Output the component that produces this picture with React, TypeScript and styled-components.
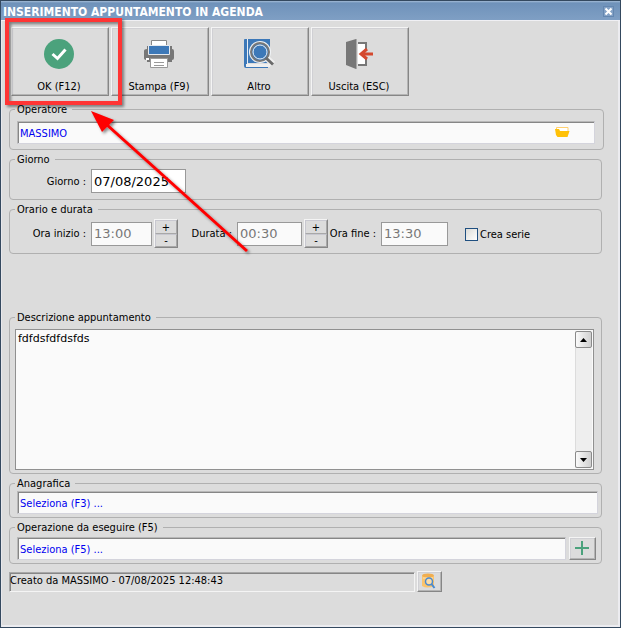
import React, { useState } from "react";
import styled, { createGlobalStyle, css } from "styled-components";

const uiFont = `"DejaVu Sans Condensed", "Noto Sans", sans-serif`;
const wideFont = `"DejaVu Sans", sans-serif`;

const GlobalStyle = createGlobalStyle`
  *, *::before, *::after { box-sizing: border-box; }
  body { margin: 0; background: #dcdcdc; }
  button, input, textarea { font: inherit; color: inherit; margin: 0; border-radius: 0; }
`;

const Window = styled.div`
  position: relative;
  display: flex;
  flex-direction: column;
  min-height: 100vh;
  overflow: hidden;
  border: 1px solid #34495f;
  background: #dcdcdc;
  box-shadow: inset 1px 0 #e8e8ec, inset -2px -2px #ececf0;
  color: #000;
  font: 11px/13px ${uiFont};
`;

const TitleBar = styled.header`
  display: flex;
  align-items: center;
  justify-content: space-between;
  height: 20px;
  padding: 3px 6px 0 2px;
  background: linear-gradient(#a3bbd6 0, #6f92ba 2px, #7f9fc4 100%);
  border-bottom: 1px solid #f0f0f4;
`;

const Title = styled.h1`
  margin: 0;
  color: #fff;
  font: bold 12px/16px ${uiFont};
  white-space: nowrap;
`;

const CloseButton = styled.button`
  display: flex;
  align-items: center;
  justify-content: center;
  width: 11px;
  height: 11px;
  margin-bottom: 2px;
  padding: 0;
  border: 1px solid #6487b0;
  background: #84a2c6;
`;

const bevel = css`
  border: 1px solid;
  border-color: #f4f4f4 #868686 #868686 #f4f4f4;
  background: #dcdcdc;
  box-shadow: inset -1px -1px #b4b4b4, inset 1px 1px #d0d0d4;
`;

const Body = styled.main`
  display: flex;
  flex-direction: column;
  gap: 3px;
  padding: 6px 18px 16px 8px;
`;

const Toolbar = styled.div`
  display: flex;
  gap: 2px;
  padding-left: 2px;
  margin-bottom: 4px;
`;

const ToolButton = styled.button`
  ${bevel}
  display: flex;
  flex-direction: column;
  align-items: center;
  justify-content: space-between;
  width: 98px;
  height: 69px;
  padding: 10px 2px 2px 0;
`;

const Group = styled.fieldset<{ $bottom?: number; $right?: number; $spaced?: boolean; $wide?: boolean }>`
  min-width: 0;
  margin: ${(p) => (p.$spaced ? 54 : 0)}px ${(p) => (p.$wide ? -2 : 0)}px 0 0;
  padding: 0 ${(p) => p.$right ?? 7}px ${(p) => p.$bottom ?? 5}px 5px;
  border: 1px solid #b0b0b0;
  border-radius: 4px;
`;

const Legend = styled.legend`
  height: 13px;
  padding: 0 5px 0 2px;
`;

const Row = styled.div<{ $top: number }>`
  display: flex;
  align-items: center;
  gap: 3px;
  padding: ${(p) => p.$top}px 0 0 2px;
`;

const Sunken = styled.div`
  display: flex;
  align-items: center;
  flex: 1;
  min-width: 0;
  height: 23px;
  border: 1px solid;
  border-color: #b8b8b8 #d4d4dc #d4d4dc #b8b8b8;
  box-shadow: inset 1px 1px #868686;
  background: #fafafa;
`;

const LookupInput = styled.input`
  flex: 1;
  min-width: 0;
  height: 21px;
  padding: 1px 2px 0;
  border: 0;
  outline: 0;
  background: transparent;
  color: #0000f0;
`;

const IconButton = styled.button`
  display: flex;
  margin-right: 24px;
  padding: 0;
  border: 0;
  background: transparent;
`;

const FieldLabel = styled.label<{ $width: number }>`
  width: ${(p) => p.$width}px;
  padding-right: 5px;
  text-align: right;
  white-space: nowrap;
`;

const ValueInput = styled.input<{ $width: number }>`
  width: ${(p) => p.$width}px;
  height: 24px;
  padding: 0 2px;
  border: 1px solid #999;
  background: #fff;
  font: 13px/16px ${wideFont};

  &:disabled {
    background: #fafafa;
    color: #777;
  }
`;

const TimeRow = styled.div<{ $top: number }>`
  display: flex;
  align-items: center;
  padding: ${(p) => p.$top}px 0 0 2px;
`;

const Spinner = styled.div`
  ${bevel}
  display: grid;
  grid-template-rows: 14px 13px;
  width: 24px;
  height: 29px;
  margin-left: 2px;
`;

const SpinButton = styled.button`
  padding: 0;
  border: 1px solid;
  border-color: #c8c8d0 #a8a8a8 #a8a8a8 #c8c8d0;
  background: #dcdcdc;
  line-height: 11px;
`;

const CheckLabel = styled.label`
  display: flex;
  align-items: center;
  gap: 2px;
  margin-left: 17px;
  padding-top: 2px;
  white-space: nowrap;
`;

const CheckBox = styled.input`
  appearance: none;
  width: 13px;
  height: 13px;
  border: 1px solid #1f4f80;
  background: linear-gradient(135deg, #dcdcd8, #fff);

  &:checked {
    background: radial-gradient(#1f4f80 45%, #fff 50%);
  }
`;

const MemoFrame = styled.div`
  display: flex;
  height: 141px;
  margin-top: 5px;
  padding: 1px;
  border: 1px solid #909090;
  background: #fafafa;
`;

const Memo = styled.textarea`
  flex: 1;
  min-width: 0;
  padding: 1px;
  border: 0;
  outline: 0;
  resize: none;
  overflow: hidden;
  background: transparent;
  font: 11px/14px ${wideFont};
`;

const ScrollBar = styled.div`
  display: flex;
  flex-direction: column;
  justify-content: space-between;
  width: 17px;
  background: #eee;
  box-shadow: inset 1px 0 #dcdcdc;
`;

const ScrollButton = styled.button`
  display: flex;
  align-items: center;
  justify-content: center;
  height: 17px;
  padding: 0;
  border: 1px solid #8a8a8a;
  border-radius: 2px;
  background: linear-gradient(90deg, #fafafa, #d0d0d0);
`;

const SmallButton = styled.button<{ $width: number; $height: number }>`
  ${bevel}
  display: flex;
  align-items: center;
  justify-content: center;
  width: ${(p) => p.$width}px;
  height: ${(p) => p.$height}px;
  padding: 0 1px 1px 0;
`;

const StatusRow = styled.footer`
  display: flex;
  gap: 2px;
  margin-top: 4px;
  padding-right: 160px;
`;

const StatusText = styled.div`
  flex: 1;
  height: 20px;
  margin-top: 1px;
  padding: 1px 0 0;
  border: 1px solid;
  border-color: #a8a8a8 #f4f4f4 #f4f4f4 #a8a8a8;
  box-shadow: inset 1px 1px #868686;
  line-height: 14px;
  white-space: nowrap;
`;

const Annotation = styled.svg`
  position: absolute;
  left: 0;
  top: 0;
  pointer-events: none;
`;

const CheckIcon = () => (
  <svg width="32" height="32" viewBox="0 0 32 32" aria-hidden="true">
    <circle cx="16" cy="16" r="15" fill="#4ba27c" />
    <path d="M9.500 16 14.500 20.500l8-9" fill="none" stroke="#fff" strokeWidth="3" />
  </svg>
);

const PrinterIcon = () => (
  <svg width="32" height="32" viewBox="0 0 32 32" aria-hidden="true">
    <path d="M4 8h3v3h19V8h3v3q2 0 2 2v7q0 2-2 2v2H4v-2q-3 0-3-2v-7q0-2 3-2z" fill="#777" />
    <path d="M8.500 2.500h15v7h-15z" fill="#fff" stroke="#888" />
    <path d="M5.500 7.500h21v9h-21z" fill="#3c78b8" stroke="#e4e8ee" />
    <path d="M7.500 20.500h17v9h-17z" fill="#fff" stroke="#999" />
    <path d="M11 24.500h10M11 27.500h10" stroke="#999" />
    <path d="M3 20h3v2H3z" fill="#fff" />
  </svg>
);

const BookSearchIcon = () => (
  <svg width="32" height="32" viewBox="0 0 32 32" aria-hidden="true">
    <path d="M1 2q0-1 1-1h25v24H5v4h20v1H3q-2 0-2-2z" fill="#3c78b8" />
    <path d="M4.500 1v25" stroke="#e8eef5" />
    <path d="M3 26h24v3H3z" fill="#f0f0f0" />
    <path d="M23 19.500 30 26" stroke="#f0f0f0" strokeWidth="6" />
    <circle cx="17" cy="14" r="11" fill="#f0f3f6" />
    <circle cx="17" cy="14" r="9" fill="#3c78b8" stroke="#777" strokeWidth="2" />
    <circle cx="17" cy="14" r="7" fill="none" stroke="#f0f3f6" strokeWidth="1" />
    <path d="m23 20 7 6.500" stroke="#6a6a6a" strokeWidth="3" />
  </svg>
);

const ExitIcon = () => (
  <svg width="32" height="32" viewBox="0 0 32 32" aria-hidden="true">
    <path d="M15 5h8v22h-8z" fill="#fff" />
    <path d="M15 5h8v6M23 21v6h-8" fill="none" stroke="#777" strokeWidth="2" />
    <path d="M3 4 13 1v30L3 27z" fill="#777" />
    <path d="M13.500 1v30" stroke="#aaa" />
    <path d="M30 16H18m6-5-6 5 6 5" fill="none" stroke="#d4492e" strokeWidth="3" />
  </svg>
);

const FolderIcon = () => (
  <svg width="15" height="11" viewBox="0 0 15 11" aria-hidden="true">
    <path d="M1.500 4V.5h11.500V4" fill="#fff" stroke="#ffd070" />
    <path d="M0 2h4l1 2h9.500L12.500 10h-10L1 8z" fill="#ffc107" />
  </svg>
);

const DatabaseSearchIcon = () => (
  <svg width="16" height="16" viewBox="0 0 16 16" aria-hidden="true">
    <path d="M1 3v10q5 3 12 0V3z" fill="#fbc46c" />
    <ellipse cx="7" cy="2.500" rx="6" ry="2" fill="#f0ae50" />
    <path d="M2 5h10" stroke="#fde0ac" />
    <circle cx="8" cy="8.500" r="3.500" fill="#fbdca8" stroke="#4a8ad0" strokeWidth="1.500" />
    <path d="m10.500 11 3 4" stroke="#4a8ad0" strokeWidth="2" />
  </svg>
);

const tools = [
  { label: "OK (F12)", icon: <CheckIcon /> },
  { label: "Stampa (F9)", icon: <PrinterIcon /> },
  { label: "Altro", icon: <BookSearchIcon /> },
  { label: "Uscita (ESC)", icon: <ExitIcon /> },
];

const StepButtons = ({ name }: { name: string }) => (
  <Spinner>
    <SpinButton type="button" aria-label={`Aumenta ${name}`}>+</SpinButton>
    <SpinButton type="button" aria-label={`Riduci ${name}`}>-</SpinButton>
  </Spinner>
);

export default function App() {
  const [date, setDate] = useState("07/08/2025");
  const [memo, setMemo] = useState("fdfdsfdfdsfds");

  return (
    <>
      <GlobalStyle />
      <Window>
        <TitleBar>
          <Title>INSERIMENTO APPUNTAMENTO IN AGENDA</Title>
          <CloseButton type="button" aria-label="Chiudi">
            <svg width="9" height="9" viewBox="0 0 9 9" aria-hidden="true">
              <path d="m1.500 1.500 6 6m0-6-6 6" stroke="#fff" strokeWidth="2" />
            </svg>
          </CloseButton>
        </TitleBar>
        <Body>
          <Toolbar>
            {tools.map((tool) => (
              <ToolButton key={tool.label} type="button">
                {tool.icon}
                <span>{tool.label}</span>
              </ToolButton>
            ))}
          </Toolbar>

          <Group $wide $right={8}>
            <Legend>Operatore</Legend>
            <Row $top={5}>
              <Sunken>
                <LookupInput aria-label="Operatore" defaultValue="MASSIMO" />
                <IconButton type="button" aria-label="Scegli operatore">
                  <FolderIcon />
                </IconButton>
              </Sunken>
            </Row>
          </Group>

          <Group $bottom={6}>
            <Legend>Giorno</Legend>
            <TimeRow $top={3}>
              <FieldLabel $width={74} htmlFor="day">Giorno :</FieldLabel>
              <ValueInput id="day" $width={95} value={date} onChange={(e) => setDate(e.target.value)} />
            </TimeRow>
          </Group>

          <Group>
            <Legend>Orario e durata</Legend>
            <TimeRow $top={3}>
              <FieldLabel $width={74} htmlFor="start">Ora inizio :</FieldLabel>
              <ValueInput id="start" $width={61} defaultValue="13:00" disabled />
              <StepButtons name="ora inizio" />
              <FieldLabel $width={59} htmlFor="duration">Durata :</FieldLabel>
              <ValueInput id="duration" $width={65} defaultValue="00:30" disabled />
              <StepButtons name="durata" />
              <FieldLabel $width={53} htmlFor="end">Ora fine :</FieldLabel>
              <ValueInput id="end" $width={67} defaultValue="13:30" disabled />
              <CheckLabel>
                <CheckBox type="checkbox" />
                Crea serie
              </CheckLabel>
            </TimeRow>
          </Group>

          <Group $spaced $bottom={3}>
            <Legend>Descrizione appuntamento</Legend>
            <MemoFrame>
              <Memo aria-label="Descrizione appuntamento" value={memo} onChange={(e) => setMemo(e.target.value)} />
              <ScrollBar>
                <ScrollButton type="button" aria-label="Scorri su">
                  <svg width="7" height="4" aria-hidden="true"><path d="M0 4h7L3.500 0z" /></svg>
                </ScrollButton>
                <ScrollButton type="button" aria-label="Scorri giù">
                  <svg width="7" height="4" aria-hidden="true"><path d="M0 0h7L3.500 4z" /></svg>
                </ScrollButton>
              </ScrollBar>
            </MemoFrame>
          </Group>

          <Group $bottom={3} $right={3}>
            <Legend>Anagrafica</Legend>
            <Row $top={1}>
              <Sunken>
                <LookupInput aria-label="Anagrafica" defaultValue="Seleziona (F3) ..." />
              </Sunken>
            </Row>
          </Group>

          <Group $bottom={3} $right={5}>
            <Legend>Operazione da eseguire (F5)</Legend>
            <Row $top={3}>
              <Sunken>
                <LookupInput aria-label="Operazione da eseguire" defaultValue="Seleziona (F5) ..." />
              </Sunken>
              <SmallButton type="button" $width={27} $height={23} aria-label="Aggiungi operazione">
                <svg width="14" height="14" viewBox="0 0 14 14" aria-hidden="true">
                  <path d="M7 0v14M0 7h14" stroke="#4ba27c" strokeWidth="2" />
                </svg>
              </SmallButton>
            </Row>
          </Group>

          <StatusRow>
            <StatusText>Creato da MASSIMO - 07/08/2025 12:48:43</StatusText>
            <SmallButton type="button" $width={25} $height={21} aria-label="Cerca">
              <DatabaseSearchIcon />
            </SmallButton>
          </StatusRow>
        </Body>

        <Annotation width="260" height="260" viewBox="1 1 260 260" aria-hidden="true">
          <defs>
            <filter id="soft" x="-10%" y="-10%" width="130%" height="130%">
              <feDropShadow dx="2" dy="2" stdDeviation="1.500" floodColor="#000" floodOpacity="0.45" />
            </filter>
          </defs>
          <rect x="7" y="20" width="113" height="83" fill="none" stroke="#ff3434" strokeWidth="4" filter="url(#soft)" />
          <g filter="url(#soft)">
            <path d="m106 124 141 127" stroke="#f00" strokeWidth="3" />
            <path d="m91 111 23 9-12 12z" fill="#f00" />
          </g>
        </Annotation>
      </Window>
    </>
  );
}
